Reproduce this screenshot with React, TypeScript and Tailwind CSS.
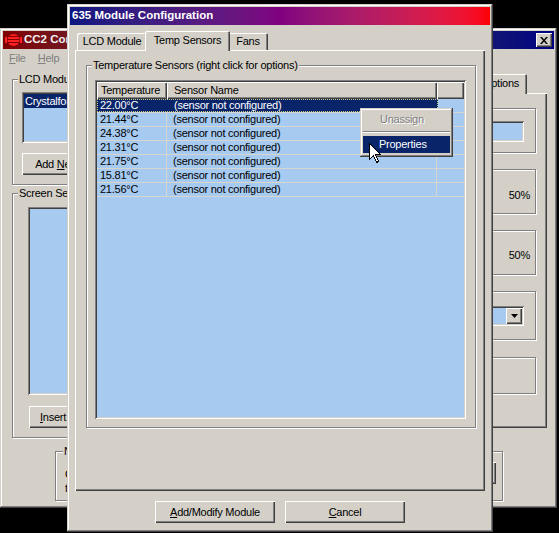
import React from "react";

const raised =
  "shadow-[inset_-1px_-1px_0_#404040,inset_1px_1px_0_#d4d0c8,inset_-2px_-2px_0_#808080,inset_2px_2px_0_#ffffff]";
const button = "shadow-[inset_1px_1px_0_#ffffff,inset_-1px_-1px_0_#404040,inset_-2px_-2px_0_#808080]";
const sunken =
  "shadow-[inset_1px_1px_0_#808080,inset_-1px_-1px_0_#ffffff,inset_2px_2px_0_#404040,inset_-2px_-2px_0_#d4d0c8]";
const etched = "border border-[#808080] shadow-[inset_1px_1px_0_#ffffff,1px_1px_0_#ffffff]";
const panel = "shadow-[inset_1px_1px_0_#ffffff,inset_-1px_-1px_0_#404040,inset_-2px_-2px_0_#808080]";

const sensors = ["22.00", "21.44", "24.38", "21.31", "21.75", "15.81", "21.56"];

function Group({
  label,
  className,
  inner = "",
  legend = "ml-[5px]",
  children,
}: {
  label?: string;
  className: string;
  inner?: string;
  legend?: string;
  children?: React.ReactNode;
}) {
  return (
    <fieldset className={`${etched} ${className}`}>
      <legend className={`${legend} px-[1px] leading-[13px] bg-[#d4d0c8]`}>{label}</legend>
      <div className={inner}>{children}</div>
    </fieldset>
  );
}

function Tab({ label, selected, className }: { label: string; selected?: boolean; className: string }) {
  return (
    <div
      className={`${
        selected ? "relative z-10 -mx-[2px] -mb-px h-[20px] pb-[2px]" : "h-[17px]"
      } ${className} flex items-center justify-center bg-[#d4d0c8] rounded-t-[2px] shadow-[inset_1px_1px_0_#ffffff,inset_-1px_0_0_#404040,inset_-2px_0_0_#808080]`}
    >
      {label}
    </div>
  );
}

function Btn({ children, className }: { children: React.ReactNode; className: string }) {
  return <div className={`${button} ${className} flex items-center bg-[#d4d0c8] whitespace-nowrap`}>{children}</div>;
}

function Logo() {
  return (
    <svg width="17" height="14" viewBox="0 0 17 14" className="mr-[2px]">
      <rect x="0" y="4" width="2" height="6" fill="#ff2020" />
      <rect x="15" y="4" width="2" height="6" fill="#ff2020" />
      <circle cx="8.5" cy="7" r="6" fill="#ff2020" />
      <rect x="3" y="3" width="11" height="1" fill="#800000" />
      <rect x="2.5" y="6" width="12" height="1" fill="#800000" />
      <rect x="3" y="9" width="11" height="1" fill="#800000" />
    </svg>
  );
}

function BackWindow() {
  return (
    <div className={`isolate absolute left-0 top-[28px] w-[557px] h-[480px] bg-[#d4d0c8] ${raised} p-[3px] flex flex-col`}>
      <div className="h-[18px] flex items-center pl-[2px] pr-[2px] bg-linear-to-r from-[#800000] to-[#000080]">
        <Logo />
        <span className="font-bold text-[11.5px] tracking-normal text-[#f0f0f0]">CC2 Config</span>
        <div className={`${button} ml-auto w-[16px] h-[14px] bg-[#d4d0c8] flex items-center justify-center`}>
          <svg width="8" height="7" viewBox="0 0 8 7">
            <path d="M0 0h2l2 2.5L6 0h2L5 3.5 8 7H6L4 4.5 2 7H0l3-3.5z" fill="#000" />
          </svg>
        </div>
      </div>
      <div className="h-[19px] flex items-center gap-[12px] pl-[6px] text-[#808080]">
        <span>
          <span className="underline">F</span>ile
        </span>
        <span>
          <span className="underline">H</span>elp
        </span>
      </div>
      <div className="flex justify-between">
        <div className="ml-[9px] w-[250px] flex flex-col">
          <Group label="LCD Modules" className="mt-[5px] h-[112px]" inner="px-[9px]">
            <div className={`${sunken} mt-[6px] h-[51px] w-[200px] bg-[#a6caf0] p-[2px]`}>
              <div className="h-[14px] bg-[#0a246a] text-white pl-[1px] leading-[14px]">Crystalfontz 635</div>
            </div>
            <Btn className="mt-[10px] w-[77px] h-[22px] justify-center">
              <span>
                Add <span className="underline">N</span>ew...
              </span>
            </Btn>
          </Group>
          <Group label="Screen Settings" className="mt-[2px] h-[251px]" inner="px-[15px]">
            <div className={`${sunken} mt-[7px] h-[188px] w-[210px] bg-[#a6caf0]`} />
            <Btn className="mt-[11px] ml-px w-[100px] h-[22px] pl-[11px]">
              <span>
                <span className="underline">I</span>nsert Screen
              </span>
            </Btn>
          </Group>
        </div>
        <div className="mr-[7px] mt-[6px] w-[250px] flex flex-col">
          <div className="flex items-end pl-[2px] h-[19px]">
            <Tab label="Display" className="w-[90px]" />
            <Tab label="Fans" className="w-[88px]" />
            <Tab label="Options" selected className="w-[52px]" />
          </div>
          <div className={`${panel} h-[335px] pl-[9px] bg-[#d4d0c8]`}>
            <Group label="Module" className="mt-[9px] w-[230px] h-[51px]">
              <div className={`${sunken} mt-[6px] ml-auto mr-[11px] w-[180px] h-[21px] bg-[#a6caf0]`} />
            </Group>
            <Group label="Contrast" className="mt-[10px] w-[230px] h-[51px]">
              <div className="flex justify-end pr-[5px] mt-[11px]">50%</div>
            </Group>
            <Group label="Backlight" className="mt-[10px] w-[230px] h-[51px]">
              <div className="flex justify-end pr-[5px] mt-[10px]">50%</div>
            </Group>
            <Group label="Port" className="mt-[10px] w-[230px] h-[55px]">
              <div className={`${sunken} mt-[8px] ml-auto mr-[11px] w-[180px] h-[20px] bg-[#a6caf0] p-[2px] flex justify-end`}>
                <div className={`${button} w-[16px] h-[16px] bg-[#d4d0c8] flex items-center justify-center`}>
                  <svg width="7" height="4" viewBox="0 0 7 4">
                    <path d="M0 0h7L3.5 4z" fill="#000" />
                  </svg>
                </div>
              </div>
            </Group>
            <Group label="Keypad" className="mt-[11px] w-[230px] h-[43px]" />
          </div>
        </div>
      </div>
      <Group label="Note" legend="ml-[7px]" className="ml-[52px] mt-[7px] w-[448px] h-[56px]" inner="pl-[9px] pr-[6px]">
        <div className="flex items-start">
          <div className="flex flex-col leading-[14px] mt-[9px]">
            <span>Changes will be sent to the module</span>
            <span>the next time it is connected.</span>
          </div>
          <Btn className="ml-auto mt-[4px] w-[75px] h-[22px] justify-center">Apply</Btn>
        </div>
      </Group>
    </div>
  );
}

function ListView() {
  return (
    <div className={`${sunken} mt-[8px] w-[371px] h-[339px] bg-[#a6caf0] p-[2px] flex flex-col`}>
      <div className="flex h-[17px] bg-[#d4d0c8]">
        <div className={`${button} w-[70px] pl-[4px] leading-[16px]`}>Temperature</div>
        <div className={`${button} w-[270px] pl-[7px] leading-[16px]`}>Sensor Name</div>
        <div className={`${button} flex-1`} />
      </div>
      {sensors.map((t, i) => (
        <div key={t + i} className="flex h-[14px] border-b border-[#d7d5cf] leading-[13px]">
          {i === 0 ? (
            <div className="flex w-[341px] bg-[#0a246a] text-white outline-1 outline-dotted outline-[#c8cc88] -outline-offset-1">
              <div className="w-[71px] pl-[3px]">{t}°C</div>
              <div className="w-[270px] pl-[6px]">(sensor not configured)</div>
            </div>
          ) : (
            <>
              <div className="w-[70px] pl-[3px] border-r border-[#d7d5cf]">{t}°C</div>
              <div className="w-[270px] pl-[6px] border-r border-[#d7d5cf]">(sensor not configured)</div>
            </>
          )}
          <div className="flex-1" />
        </div>
      ))}
    </div>
  );
}

function FrontWindow() {
  return (
    <div className={`isolate absolute left-[67px] top-[4px] w-[426px] h-[528px] bg-[#d4d0c8] ${raised} p-[3px] flex flex-col`}>
      <div className="h-[18px] flex items-center pl-[2px] font-bold text-[11.5px] tracking-normal text-white bg-linear-to-r from-[#0a1680] via-[#800080] to-[#ff0000]">
        635 Module Configuration
      </div>
      <div className="mt-[6px] ml-[7px] flex items-end h-[19px]">
        <Tab label="LCD Module" className="w-[70px]" />
        <Tab label="Temp Sensors" selected className="w-[85px]" />
        <Tab label="Fans" className="w-[40px]" />
      </div>
      <div className={`${panel} ml-[5px] w-[410px] h-[441px] pt-[9px] pl-[11px]`}>
        <Group label="Temperature Sensors (right click for options)" className="w-[390px] h-[369px]" inner="px-[8px]">
          <ListView />
        </Group>
      </div>
      <div className="mt-[10px] ml-[85px] flex gap-[10px]">
        <Btn className="w-[120px] h-[22px] justify-center">
          <span>
            <span className="underline">A</span>dd/Modify Module
          </span>
        </Btn>
        <Btn className="w-[120px] h-[22px] justify-center">
          <span>
            <span className="underline">C</span>ancel
          </span>
        </Btn>
      </div>
    </div>
  );
}

function ContextMenu() {
  return (
    <div className={`isolate absolute left-[360px] top-[108px] w-[93px] h-[49px] bg-[#d4d0c8] ${raised} p-[3px] flex flex-col`}>
      <div className="h-[17px] leading-[17px] pl-[17px] text-[#808080] [text-shadow:1px_1px_0_#ffffff]">Unassign</div>
      <div className="my-[3px] h-[2px] border-t border-[#808080] border-b border-b-white" />
      <div className="h-[17px] leading-[17px] pl-[16px] bg-[#0a246a] text-white">Properties</div>
    </div>
  );
}

function Cursor() {
  return (
    <svg
      width="12"
      height="20"
      viewBox="0 0 12 20"
      className="absolute left-[369px] top-[143px]"
      shapeRendering="crispEdges"
    >
      <path d="M0.5 0.5 L0.5 16.5 L4.5 12.5 L7.5 19.5 L9.5 18.5 L6.5 11.5 L11.5 11.5 Z" fill="#fff" stroke="#000" />
    </svg>
  );
}

export default function App() {
  return (
    <div className="relative w-[559px] h-[533px] overflow-hidden bg-black text-[11px] tracking-[-0.25px] text-black font-['Liberation_Sans',Arial,sans-serif]">
      <BackWindow />
      <FrontWindow />
      <ContextMenu />
      <Cursor />
    </div>
  );
}
